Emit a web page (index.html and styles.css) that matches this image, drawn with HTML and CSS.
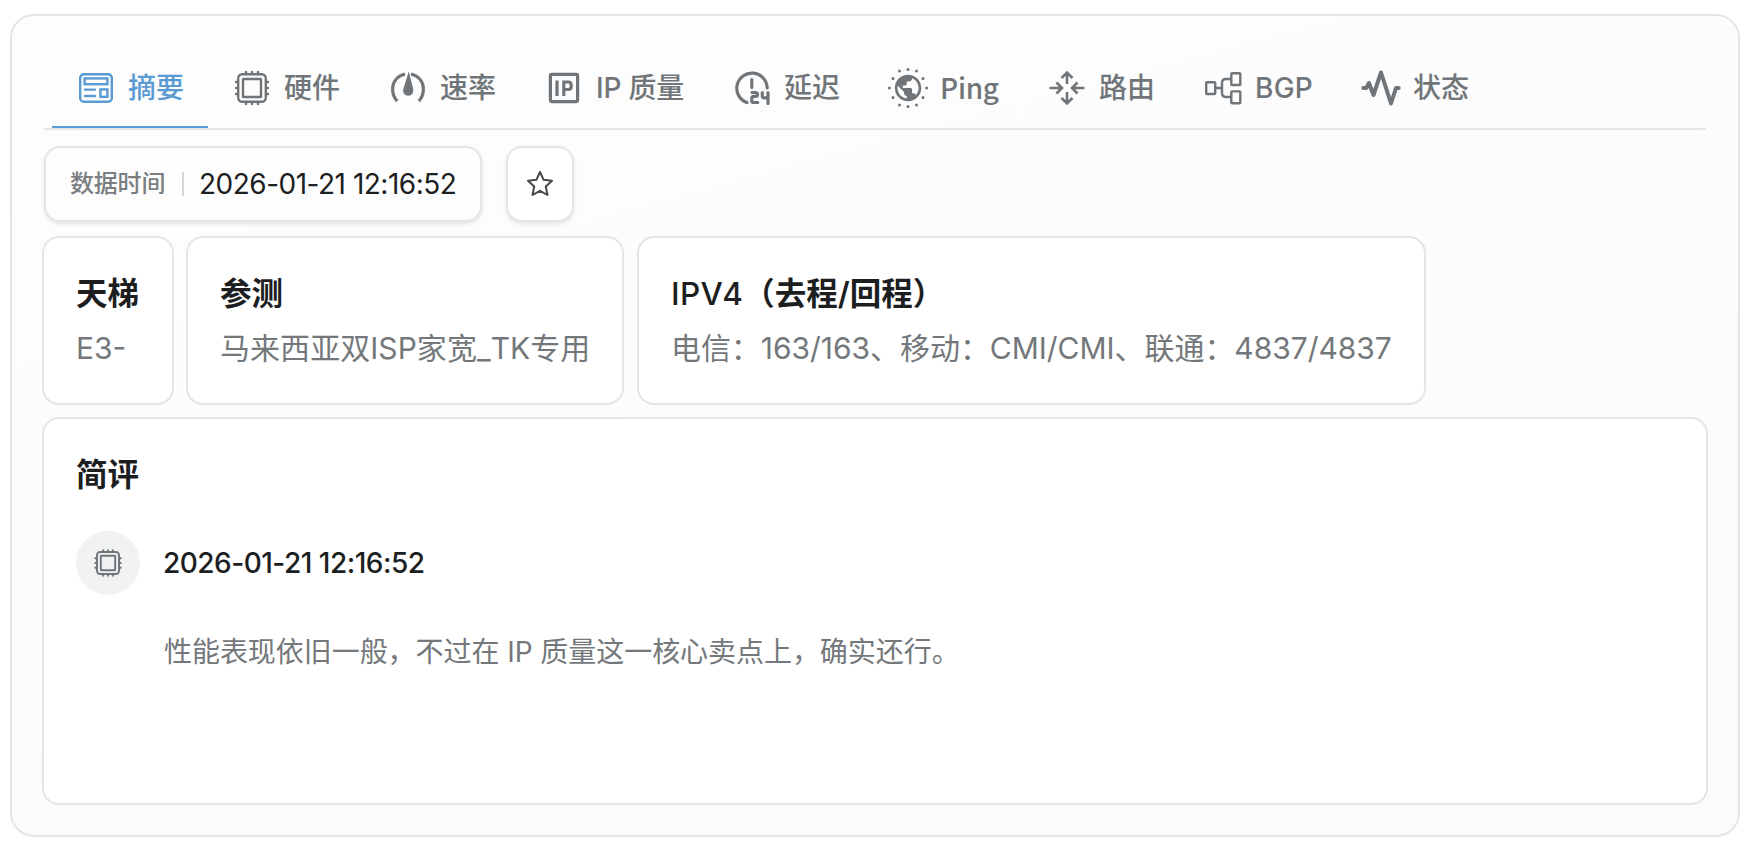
FILE: index.html
```html
<!DOCTYPE html>
<html lang="zh-CN">
<head>
<meta charset="UTF-8">
<meta name="viewport" content="width=device-width, initial-scale=1.0">
<title>摘要</title>
<link rel="stylesheet" href="styles.css">
</head>
<body>
<svg class="sprite" width="0" height="0">
    <symbol id="chip" viewBox="0 0 40 40">
        <g fill="none" stroke="currentColor" stroke-width="2.4">
            <rect x="6.2" y="6.2" width="27.6" height="27.6" rx="4"/>
            <rect x="11" y="11" width="18" height="18" rx=".5"/>
            <path stroke-linecap="round" d="M14 6V4M20 6V4M26 6V4M14 36v-2M20 36v-2M26 36v-2M6 14H4M6 20H4M6 26H4M36 14h-2M36 20h-2M36 26h-2"/>
        </g>
    </symbol>
</svg>
<div class="panel">
    <nav class="tabs">
        <a class="tab active">
            <svg class="icon" viewBox="0 0 40 40" fill="none" stroke="currentColor" stroke-width="2.4">
                <rect x="4.2" y="6.2" width="31.6" height="27.6" rx="3.5"/>
                <rect x="8.6" y="10.4" width="22.8" height="5.8"/>
                <rect x="24.4" y="21.4" width="7" height="7.4"/>
                <path stroke-linecap="round" d="M9 21.6h10M9 28h10"/>
            </svg>
            <span>摘要</span>
        </a>
        <a class="tab">
            <svg class="icon"><use href="#chip"/></svg>
            <span>硬件</span>
        </a>
        <a class="tab">
            <svg class="icon" viewBox="0 0 40 40">
                <path fill="none" stroke="currentColor" stroke-width="3.2" d="M17 6C9 8 4.6 14 4.6 21c0 5 1.6 9 4.6 12M23 6c8 2 12.4 8 12.4 15 0 5-1.6 9-4.6 12"/>
                <path fill="currentColor" d="M20.8 3.5l4.4 17.5a5.2 5.2 0 1 1-9.9 0z"/>
            </svg>
            <span>速率</span>
        </a>
        <a class="tab">
            <svg class="icon" viewBox="0 0 40 40" fill="none" stroke="currentColor" stroke-width="3.2">
                <rect x="6.4" y="6.4" width="27.2" height="27.2" rx="1.5"/>
                <path d="M13 12.5V28M19.8 28V14h4.4q3 0 3 3v1.5q0 3-3 3h-4"/>
            </svg>
            <span class="ip"><span class="latin">IP</span> 质量</span>
        </a>
        <a class="tab">
            <svg class="icon" viewBox="0 0 40 40" fill="none" stroke="currentColor" stroke-width="3.2" stroke-linecap="round" stroke-linejoin="round">
                <path d="M15 34.6A15.2 15.2 0 1 1 35.2 20M19.8 11.5V19.5"/>
                <path d="M20 24.5h3.5q2 0 2 1.9t-2 1.9h-1.5q-2.2 0-2.2 2.2v2.2q0 1.8 1.7 1.8h4.3M30.3 24.5v3.5q0 1.9 1.8 1.9h3.9M36 24.5v11"/>
            </svg>
            <span>延迟</span>
        </a>
        <a class="tab">
            <svg class="icon" viewBox="0 0 40 40" fill="currentColor">
                <path transform="translate(4.2 4.2) scale(1.32)" d="M12 2C6.48 2 2 6.48 2 12s4.48 10 10 10 10-4.48 10-10S17.52 2 12 2zm-1 17.93c-3.95-.49-7-3.85-7-7.93 0-.62.08-1.21.21-1.79L9 15v1c0 1.1.9 2 2 2v1.93zm6.9-2.54c-.26-.81-1-1.39-1.9-1.39h-1v-3c0-.55-.45-1-1-1H8v-2h2c.55 0 1-.45 1-1V7h2c1.1 0 2-.9 2-2v-.41c2.93 1.19 5 4.06 5 7.41 0 2.08-.8 3.97-2.1 5.39z"/>
                <circle cx="20" cy="1.4" r="1.5"/>
                <circle cx="28.5" cy="3" r="1.5"/>
                <circle cx="35" cy="10.5" r="1.5"/>
                <circle cx="38.6" cy="20" r="1.5"/>
                <circle cx="35" cy="29.5" r="1.5"/>
                <circle cx="28.5" cy="37" r="1.5"/>
                <circle cx="20" cy="38.6" r="1.5"/>
                <circle cx="11.5" cy="37" r="1.5"/>
                <circle cx="5" cy="29.5" r="1.5"/>
                <circle cx="1.4" cy="20" r="1.5"/>
                <circle cx="5" cy="10.5" r="1.5"/>
                <circle cx="11.5" cy="3" r="1.5"/>
            </svg>
            <span class="ping">Ping</span>
        </a>
        <a class="tab">
            <svg class="icon" viewBox="0 0 40 40" fill="none" stroke="currentColor" stroke-width="2.6">
                <path d="M20 16V4.5M14.5 10L20 4.5l5.5 5.5M20 24v11.5M14.5 30l5.5 5.5 5.5-5.5M2.5 20H15M9.5 14.5L15 20l-5.5 5.5M37.5 20H25M30.5 14.5L25 20l5.5 5.5"/>
            </svg>
            <span>路由</span>
        </a>
        <a class="tab">
            <svg class="icon" viewBox="0 0 40 40" fill="none" stroke="currentColor" stroke-width="2.4">
                <rect x="3.2" y="14.2" width="9" height="11.8" rx=".8"/>
                <rect x="28.3" y="5.2" width="9" height="11.8" rx=".8"/>
                <rect x="28.3" y="23.4" width="9" height="11.8" rx=".8"/>
                <path d="M12 20h7M28 11h-5q-4 0-4 4v10q0 4 4 4h5"/>
            </svg>
            <span class="bgp">BGP</span>
        </a>
        <a class="tab">
            <svg class="icon" viewBox="0 0 40 40" fill="none" stroke="currentColor" stroke-width="4" stroke-linecap="round" stroke-linejoin="round">
                <path d="M2.3 20h3L8 15l4.5 12L20 4.5l10 31L35 20h2.7"/>
            </svg>
            <span>状态</span>
        </a>
    </nav>

    <div class="toolbar">
        <div class="data-time">
            <span class="data-label">数据时间</span>
            <span class="data-value">2026-01-21 12:16:52</span>
        </div>
        <button class="star">
            <svg viewBox="0 0 28 28" fill="none" stroke="currentColor" stroke-width="2" stroke-linejoin="round">
                <path d="M14 2l3.6 7.8 8.4 1-6.2 5.8 1.7 8.4-7.5-4.2L6.5 25l1.7-8.4L2 10.8l8.4-1z"/>
            </svg>
        </button>
    </div>

    <div class="cards">
        <div class="card rank">
            <h3>天梯</h3>
            <p>E3-</p>
        </div>
        <div class="card">
            <h3>参测</h3>
            <p class="server">马来西亚双ISP家宽_TK专用</p>
        </div>
        <div class="card">
            <h3><span class="ipv4">IPV4</span>（去程/回程）</h3>
            <p class="routes">电信：163/163、移动：CMI/CMI、联通：4837/4837</p>
        </div>
    </div>

    <div class="card review">
        <h3>简评</h3>
        <div class="review-head">
            <div class="avatar"><svg><use href="#chip"/></svg></div>
            <span class="review-time">2026-01-21 12:16:52</span>
        </div>
        <div class="review-text">性能表现依旧一般，不过在 IP 质量这一核心卖点上，确实还行。</div>
    </div>
</div>
</body>
</html>
```
FILE: styles.css
```css
* {
    box-sizing: border-box;
}
body {
    margin: 0;
    padding: 14px 14px 13px 10px;
    background-color: #ffffff;
    font-family: Inter, "Noto Sans CJK SC", sans-serif;
    color: #1c1e1f;
}
.sprite {
    position: absolute;
}
.panel {
    height: 823px;
    padding: 32px 30px 31px 30px;
    border: 2px solid #e4e6e6;
    border-radius: 24px;
    background: linear-gradient(165deg, #fdfdfd, #fbfbfb);
}
.tabs {
    display: flex;
    height: 82px;
    margin: 0 2px;
    padding-left: 8px;
    border-bottom: 2px solid #e4e6e6;
}
.tab {
    display: flex;
    align-items: center;
    gap: 12px;
    padding: 2px 24px 0;
    font-size: 28px;
    font-weight: 500;
    line-height: 40px;
    white-space: nowrap;
    color: #707579;
    border-bottom: 2px solid transparent;
}
.tab.active {
    color: #5b9bd3;
    border-bottom-color: #5b9bd3;
}
.icon {
    width: 40px;
    height: 40px;
    flex: none;
    overflow: visible;
}
.ip {
    width: 88px;
    letter-spacing: -0.2px;
}
.latin {
    font-weight: 450;
}
.ping {
    width: 59px;
    padding-bottom: 2px;
    font-family: "Noto Sans CJK SC", sans-serif;
    letter-spacing: -0.3px;
}
.bgp {
    width: 58px;
    font-weight: 450;
    letter-spacing: 0.2px;
}
.toolbar {
    display: flex;
    gap: 24px;
    margin: 16px 0 14px 2px;
}
.data-time, .star {
    height: 76px;
    border: 2px solid #e4e6e6;
    border-radius: 16px;
    background-color: #fdfdfd;
    box-shadow: 0 2px 4px rgba(0, 0, 0, 0.1);
}
.data-time {
    display: flex;
    align-items: center;
    width: 438px;
    padding-left: 24px;
    white-space: nowrap;
}
.data-label {
    width: 114px;
    margin-right: 15px;
    border-right: 2px solid #d4d6d8;
    font-size: 24px;
    font-weight: 500;
    line-height: 24px;
    letter-spacing: -0.2px;
    color: #7a7e81;
}
.data-value {
    font-size: 28px;
    letter-spacing: -0.5px;
}
.star {
    display: flex;
    align-items: center;
    justify-content: center;
    width: 68px;
    padding: 0;
    background-color: #ffffff;
    color: #44474b;
}
.star svg {
    width: 28px;
    height: 28px;
}
.cards {
    display: flex;
    gap: 12.5px;
    margin-bottom: 12px;
}
.card {
    height: 169px;
    padding: 32px;
    border: 2px solid #e4e6e6;
    border-radius: 17px;
    background-color: #ffffff;
    white-space: nowrap;
}
.rank {
    width: 131.5px;
}
.card h3 {
    margin: 0;
    font-size: 31.5px;
    font-weight: 600;
    line-height: 48px;
}
.ipv4 {
    font-weight: 550;
    letter-spacing: 0.4px;
}
.card p {
    margin: 7px 0 0;
    font-size: 30px;
    line-height: 46px;
    color: #74787b;
}
.card .server {
    letter-spacing: 0.05px;
}
.card .routes {
    letter-spacing: -0.04px;
}
.review {
    height: 388px;
}
.review-head {
    display: flex;
    align-items: center;
    gap: 23px;
    margin-top: 32px;
}
.avatar {
    display: flex;
    align-items: center;
    justify-content: center;
    width: 64px;
    height: 64px;
    border-radius: 50%;
    background-color: #f1f3f3;
    color: #707579;
}
.avatar svg {
    width: 32px;
    height: 32px;
}
.review-time {
    font-size: 28px;
    font-weight: 500;
    letter-spacing: -0.5px;
}
.review-text {
    margin: 37px 0 0 88px;
    font-size: 28px;
    line-height: 40px;
    letter-spacing: -0.05px;
    color: #74787b;
}
```
